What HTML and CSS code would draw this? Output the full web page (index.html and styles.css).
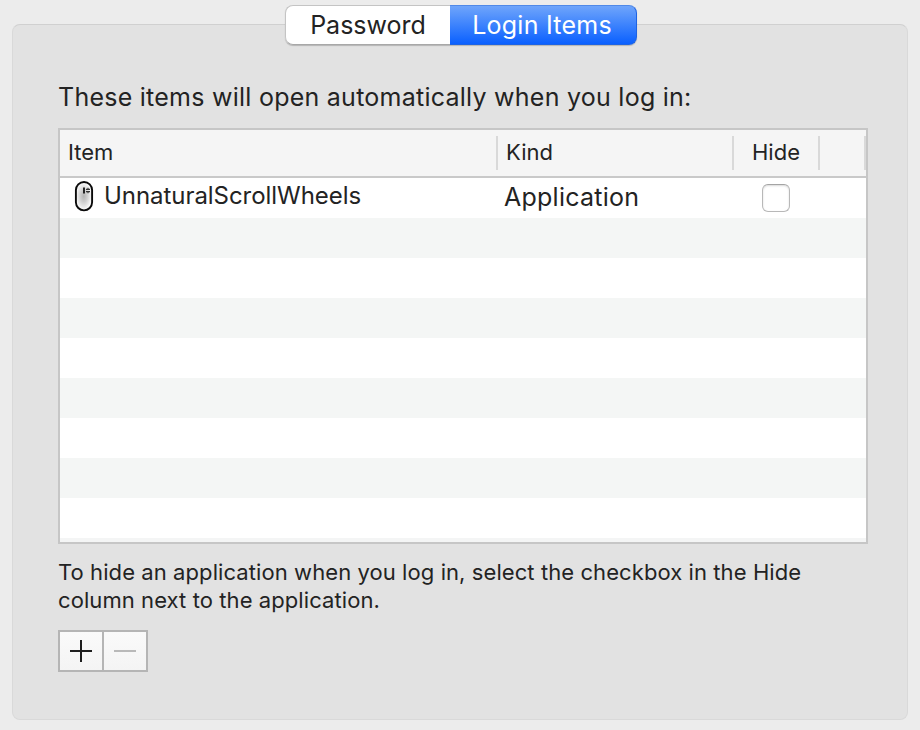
FILE: index.html
```html
<!DOCTYPE html>
<html lang="en">
<head>
<meta charset="utf-8">
<title>Login Items</title>
<link rel="stylesheet" href="styles.css">
</head>
<body>
<main class="panel">
  <nav class="tabs">
    <span class="tab tab-password"><span class="t">Password</span></span>
    <span class="tab tab-login"><span class="t">Login Items</span></span>
  </nav>
  <h1 class="title"><span class="t">These items will open automatically when you log in:</span></h1>
  <section class="table">
    <div class="head">
      <div class="cell item"><span class="t">Item</span></div>
      <div class="cell kind"><span class="t">Kind</span></div>
      <div class="cell hide"><span class="t">Hide</span></div>
      <div class="cell spare"></div>
    </div>
    <div class="row">
      <div class="name">
        <svg class="mouse" width="20" height="32" viewBox="0 0 20 32">
          <defs>
            <radialGradient id="body" cx=".48" cy=".5" r=".52">
              <stop offset="0" stop-color="#b4b4b4"/>
              <stop offset=".4" stop-color="#cecece"/>
              <stop offset="1" stop-color="#fff"/>
            </radialGradient>
          </defs>
          <rect x="1.9" y="2" width="16.2" height="28.4" rx="8.1" fill="url(#body)" stroke="#0a0a0a" stroke-width="1.9"/>
          <path d="M10 7.4v6.2" stroke="#111" stroke-width="1.8"/>
          <path d="M14 7.8v1.6M14 11.6v1.6M12 9.4h4M12 11.6h4" stroke="#333" stroke-width="1.1"/>
        </svg>
        <span class="t">UnnaturalScrollWheels</span>
      </div>
      <div class="type"><span class="t">Application</span></div>
      <div class="check"><span class="box"></span></div>
    </div>
    <div class="row"></div>
    <div class="row"></div>
    <div class="row"></div>
    <div class="row"></div>
    <div class="row"></div>
    <div class="row"></div>
    <div class="row"></div>
    <div class="row"></div>
  </section>
  <p class="note"><span class="t">To hide an application when you log in, select the checkbox in the Hide</span><br><span class="t">column next to the application.</span></p>
  <div class="buttons">
    <span class="btn"><svg width="22" height="22" viewBox="0 0 22 22"><path d="M0 11h22M11 0v22" stroke="#1e1e1e" stroke-width="2"/></svg></span>
    <span class="btn"><svg width="22" height="22" viewBox="0 0 22 22"><path d="M0 11h22" stroke="#b9b9b9" stroke-width="2"/></svg></span>
  </div>
</main>
</body>
</html>
```
FILE: styles.css
```css
* { box-sizing: border-box; }
body {
  margin: 0;
  height: 730px;
  padding: 24px 12px 0;
  overflow: hidden;
  background: #ececec;
  color: #232323;
  font-family: Inter, "Liberation Sans", sans-serif;
}
.t { white-space: nowrap; }
.panel {
  height: 696px;
  padding: 0 39px 0 45px;
  background: #e2e2e2;
  border: 1px solid #d9d9d9;
  border-top-color: #d0d0d0;
  border-radius: 8px;
}
.tabs {
  display: flex;
  width: 352px;
  height: 40px;
  margin: -20px 0 0 227px;
  border-radius: 8px;
  box-shadow: 0 1px 1px rgba(0,0,0,.2);
}
.tab {
  display: flex;
  align-items: center;
  justify-content: center;
  font-size: 25px;
  line-height: 40px;
}
.tab-password {
  width: 165px;
  background: #fff;
  border: 1px solid #c4c4c4;
  border-bottom-color: #a8a8a8;
  border-right: 0;
  border-radius: 8px 0 0 8px;
}
.tab-login {
  width: 187px;
  padding-right: 2px;
  color: #fff;
  letter-spacing: .25px;
  background: linear-gradient(#6fa5fb, #0a60ff);
  border: 1px solid #1d63e4;
  border-top-color: #5089e8;
  border-left: 0;
  border-radius: 0 8px 8px 0;
}
.title {
  margin: 37px 0 0;
  height: 46px;
  font-size: 25px;
  font-weight: 400;
  line-height: 30px;
  letter-spacing: .25px;
}
.table {
  width: 810px;
  height: 416px;
  background: #f4f5f5;
  border: 2px solid #c6c6c6;
}
.head {
  display: flex;
  align-items: center;
  height: 48px;
  background: #f5f5f5;
  border-bottom: 2px solid #c9c9c9;
}
.cell {
  height: 34px;
  border-right: 2px solid #d9d9d9;
  font-size: 22px;
  line-height: 33px;
}
.item { width: 438px; padding-left: 8px; }
.kind { width: 236px; padding-left: 8px; }
.hide { width: 86px; padding-left: 18px; }
.spare { width: 46px; }
.row {
  display: flex;
  height: 40px;
  background: #fff;
}
.row:nth-child(odd) { background: #f4f6f5; }
.name {
  display: flex;
  width: 438px;
  padding-left: 14px;
  font-size: 24px;
  line-height: 36px;
  letter-spacing: -.05px;
}
.mouse { margin: 2px 10px 0 0; }
.type {
  width: 236px;
  padding-left: 6px;
  font-size: 25px;
  line-height: 39px;
  letter-spacing: .25px;
}
.check { padding: 6px 0 0 28px; }
.box {
  display: block;
  width: 28px;
  height: 28px;
  background: #fff;
  border: 1px solid #b8b8b8;
  border-top-color: #a4a4a4;
  border-radius: 6px;
  box-shadow: inset 0 1px 2px rgba(0,0,0,.15);
}
.note {
  margin: 14px 0 0;
  height: 56px;
  font-size: 22px;
  line-height: 28px;
  letter-spacing: .08px;
}
.buttons {
  display: flex;
  width: 90px;
  height: 42px;
  margin-top: 16px;
  border: 2px solid #b5b5b5;
  background: linear-gradient(#fafafa, #f4f4f4);
}
.btn {
  display: flex;
  align-items: center;
  justify-content: center;
  width: 42px;
}
.btn + .btn { width: 44px; border-left: 2px solid #b5b5b5; }
```
